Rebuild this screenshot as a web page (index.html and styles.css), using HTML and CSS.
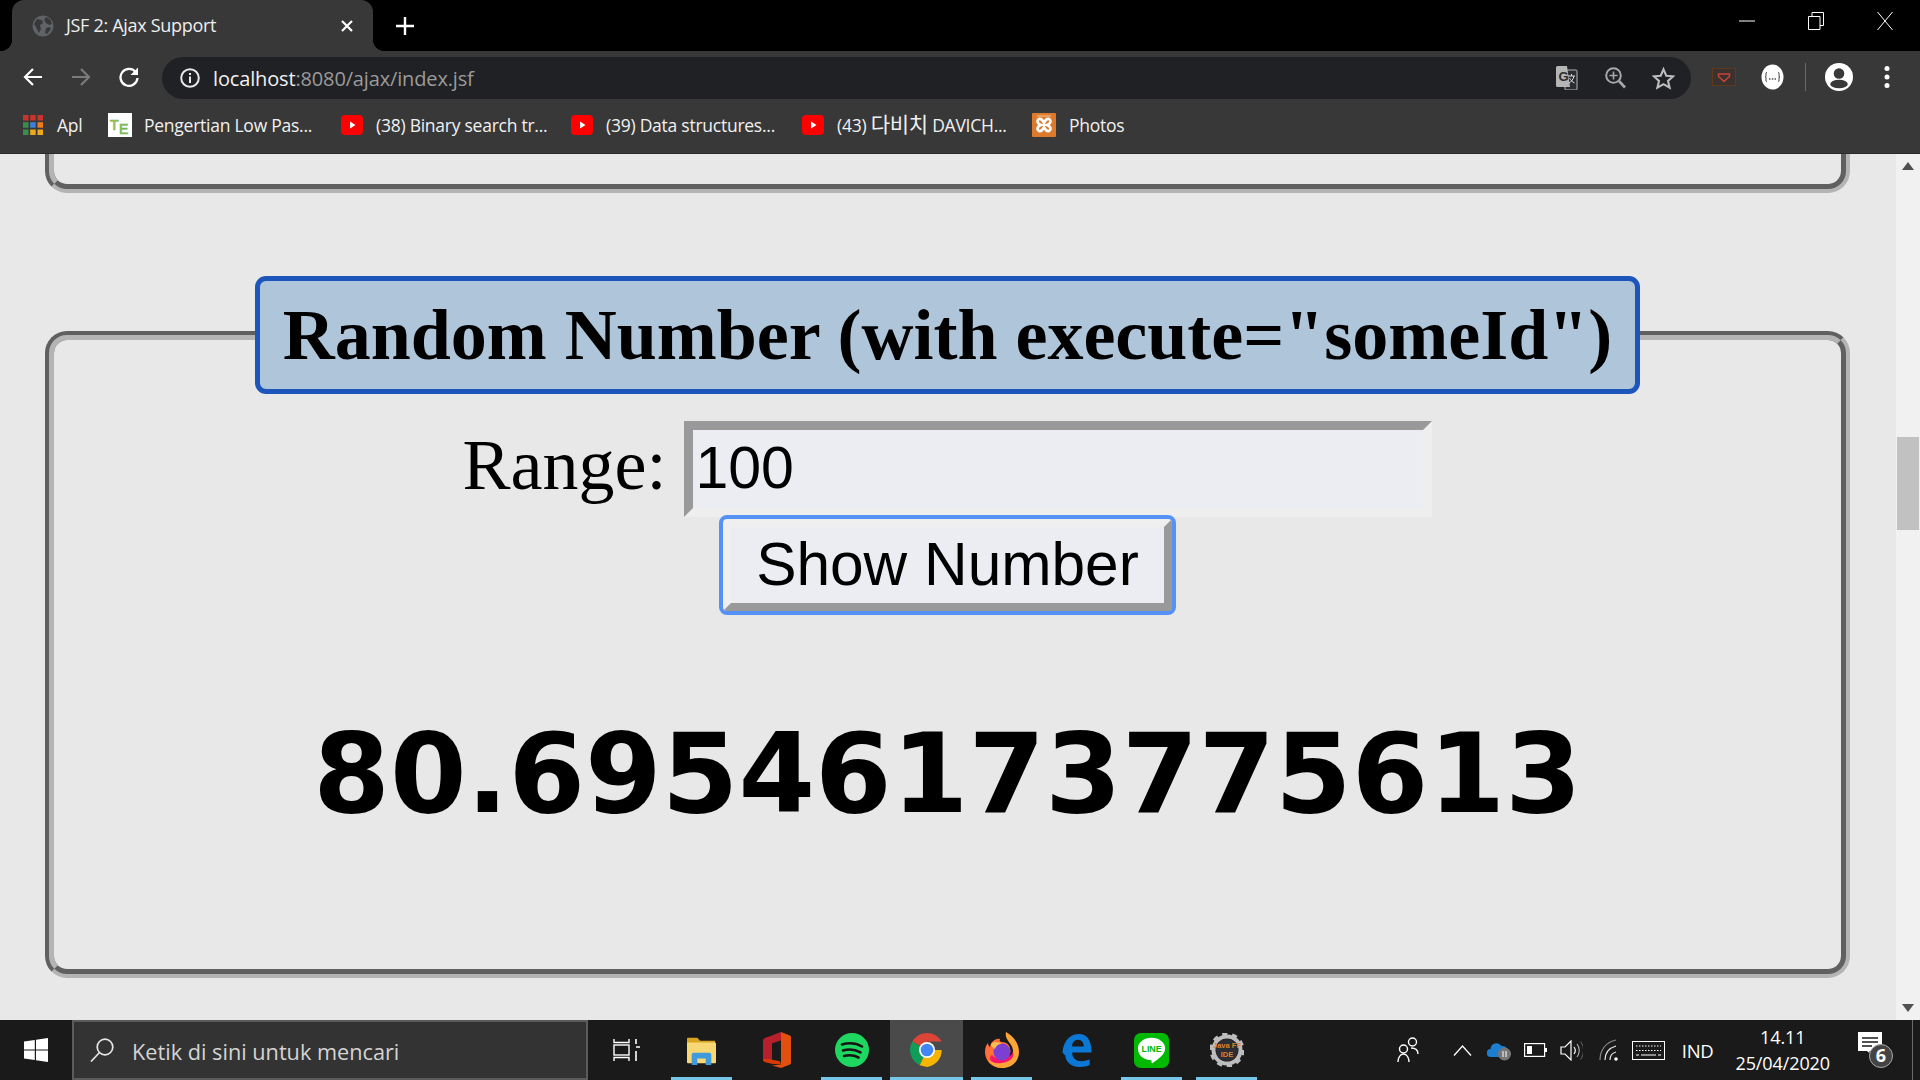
FILE: index.html
```html
<!DOCTYPE html>
<html lang="en">
<head>
  <meta charset="UTF-8">
  <title>JSF 2: Ajax Support</title>
  <link rel="stylesheet" href="styles.css">
</head>
<body>
  <svg class="defs" width="0" height="0">
    <symbol id="yt" viewBox="0 0 22 20">
      <rect x="0" y="0" width="22" height="20" rx="4" fill="#f00"/>
      <path d="M9 6.500 14.500 10 9 13.500z" fill="#fff"/>
    </symbol>
  </svg>

  <div class="tabbar">
    <div class="tab">
      <svg class="tab-icon" width="22" height="22" viewBox="0 0 22 22">
        <circle cx="11" cy="11" r="10.500" fill="#5f6368"/>
        <path d="M5 4l5 1 1 3-3 2 1 4-2 4-3-6-2-3zM14 2l4 2 2 5-3 1-3-2-2-3zM14 13l4-1 1 2-4 5-2-1z" fill="#383838"/>
      </svg>
      <span class="tab-title">JSF 2: Ajax Support</span>
      <svg class="tab-close" width="14" height="14" viewBox="0 0 14 14">
        <path d="M2 2l10 10M12 2 2 12" stroke="#fff" stroke-width="2.200"/>
      </svg>
    </div>
    <svg class="new-tab" width="20" height="20" viewBox="0 0 20 20">
      <path d="M10 1v18M1 10h18" stroke="#fff" stroke-width="2.400"/>
    </svg>
    <div class="win-controls">
      <svg width="16" height="16" viewBox="0 0 16 16"><path d="M0 8h16" stroke="#fff" stroke-width="1"/></svg>
      <svg width="16" height="18" viewBox="0 0 16 18"><path d="M.5 4.500h11.500v13H.5zM4 4.500V.5h11.500v13H12" fill="none" stroke="#fff"/></svg>
      <svg width="16" height="18" viewBox="0 0 16 18"><path d="M.5 0 15.500 18M15.500 0 .5 18" stroke="#fff"/></svg>
    </div>
  </div>

  <div class="toolbar">
    <div class="nav-btn">
      <svg width="20" height="20" viewBox="0 0 20 20"><path d="M19 10H2M10 2l-8 8 8 8" fill="none" stroke="#fff" stroke-width="2.200"/></svg>
    </div>
    <div class="nav-btn">
      <svg width="20" height="20" viewBox="0 0 20 20"><path d="M1 10h17M10 2l8 8-8 8" fill="none" stroke="#7b7b7b" stroke-width="2.200"/></svg>
    </div>
    <div class="nav-btn">
      <svg width="22" height="22" viewBox="0 0 22 22"><path d="M18 6.500A8.500 8.500 0 1 0 19.500 12" fill="none" stroke="#fff" stroke-width="2.300"/><path d="M20 1.500V9h-7.500z" fill="#fff"/></svg>
    </div>
    <div class="omnibox">
      <svg class="info-icon" width="20" height="20" viewBox="0 0 20 20">
        <circle cx="10" cy="10" r="8.800" fill="none" stroke="#e8e8e8" stroke-width="2"/>
        <path d="M9 8.500h2V15H9zM9 5h2v2H9z" fill="#e8e8e8"/>
      </svg>
      <span class="url"><span class="url-host">localhost</span>:8080/ajax/index.jsf</span>
      <div class="omni-icons">
        <div class="nav-btn">
          <svg width="22" height="24" viewBox="0 0 22 24">
            <rect x="9" y="4" width="12" height="20" rx="1" fill="#2b2c2f" stroke="#b5b5b5"/>
            <path d="M0 1.500A1.500 1.500 0 0 1 1.500 0H11l3 21H1.500A1.500 1.500 0 0 1 0 19.500z" fill="#b5b5b5"/>
            <text x="2.500" y="15" class="icon-g">G</text>
            <path d="M12 10h7M15.500 8v2M18 10c-1 4-3 6-5 7M13.500 12c1 2 3 4 5 5" fill="none" stroke="#dcdcdc"/>
          </svg>
        </div>
        <div class="nav-btn">
          <svg width="21" height="22" viewBox="0 0 21 22">
            <circle cx="8.500" cy="8.500" r="7.300" fill="none" stroke="#a8a8a8" stroke-width="2"/>
            <path d="M14 14l6 6.500" stroke="#a8a8a8" stroke-width="2.600"/>
            <path d="M8.500 4.500v8M4.500 8.500h8" stroke="#a8a8a8" stroke-width="1.600"/>
          </svg>
        </div>
        <div class="nav-btn">
          <svg width="23" height="23" viewBox="0 0 23 23"><path d="M11.500 2.300l2.800 6.400 6.900.6-5.200 4.600 1.600 6.800-6.100-3.600-6.100 3.600 1.600-6.800L1.800 9.300l6.900-.6z" fill="none" stroke="#bdbdbd" stroke-width="2.100"/></svg>
        </div>
      </div>
    </div>
    <div class="ext-icons">
      <div class="nav-btn">
        <svg width="24" height="18" viewBox="0 0 24 18">
          <rect x=".5" y=".5" width="23" height="17" fill="#3b3230" stroke="#5c3a1e"/>
          <path d="M6.500 6h11v2.500L12 13.500 6.500 8.500z" fill="none" stroke="#c94236" stroke-width="1.500"/>
        </svg>
      </div>
      <div class="nav-btn">
        <svg width="23" height="26" viewBox="0 0 23 26">
          <ellipse cx="11.500" cy="13" rx="11" ry="12.500" fill="#fff"/>
          <path d="M6 8.500c-1.500 0-1 1.500-1 3s-.5 1.500-1 1.500c.5 0 1 0 1 1.500s-.5 3 1 3M17 8.500c1.500 0 1 1.500 1 3s.5 1.500 1 1.500c-.5 0-1 0-1 1.500s.5 3-1 3" fill="none" stroke="#333" stroke-width="1"/>
          <path d="M8 15h1.500M10.800 15h1.500M13.500 15H15" stroke="#555" stroke-width="1.500"/>
        </svg>
      </div>
      <div class="toolbar-divider"></div>
      <div class="nav-btn">
        <svg width="28" height="28" viewBox="0 0 28 28">
          <circle cx="14" cy="14" r="14" fill="#fff"/>
          <circle cx="14" cy="10.500" r="5.300" fill="#383838"/>
          <ellipse cx="14" cy="21" rx="8.800" ry="4.300" fill="#383838"/>
        </svg>
      </div>
      <div class="nav-btn">
        <svg width="6" height="24" viewBox="0 0 6 24"><circle cx="3" cy="3.500" r="2.500" fill="#fff"/><circle cx="3" cy="12" r="2.500" fill="#fff"/><circle cx="3" cy="20.500" r="2.500" fill="#fff"/></svg>
      </div>
    </div>
  </div>

  <div class="bookmarks">
    <div class="bm bm-apps">
      <svg width="20" height="20" viewBox="0 0 20 20">
        <rect x="0" y="0" width="5.500" height="5.500" fill="#c8352d"/><rect x="7.200" y="0" width="5.500" height="5.500" fill="#c8352d"/><rect x="14.500" y="0" width="5.500" height="5.500" fill="#c8352d"/>
        <rect x="0" y="7.200" width="5.500" height="5.500" fill="#3a8e4a"/><rect x="7.200" y="7.200" width="5.500" height="5.500" fill="#3f7fdc"/><rect x="14.500" y="7.200" width="5.500" height="5.500" fill="#ef7d1a"/>
        <rect x="0" y="14.500" width="5.500" height="5.500" fill="#3a8e4a"/><rect x="7.200" y="14.500" width="5.500" height="5.500" fill="#efa81b"/><rect x="14.500" y="14.500" width="5.500" height="5.500" fill="#efa81b"/>
      </svg>
      <span>Apl</span>
    </div>
    <div class="bm bm-te">
      <svg width="24" height="24" viewBox="0 0 24 24">
        <rect width="24" height="24" fill="#fff"/>
        <text x="2" y="17" class="icon-te">T</text>
        <text x="11" y="21" class="icon-te icon-te-e">E</text>
      </svg>
      <span>Pengertian Low Pas...</span>
    </div>
    <div class="bm bm-38">
      <svg width="22" height="20"><use href="#yt"/></svg>
      <span>(38) Binary search tr...</span>
    </div>
    <div class="bm bm-39">
      <svg width="22" height="20"><use href="#yt"/></svg>
      <span>(39) Data structures...</span>
    </div>
    <div class="bm bm-43">
      <svg width="22" height="20"><use href="#yt"/></svg>
      <span>(43) <span class="bm-ko">다비치</span> DAVICH...</span>
    </div>
    <div class="bm bm-photos">
      <svg width="24" height="24" viewBox="0 0 24 24">
        <rect width="24" height="24" rx="1" fill="#dd7a2b"/>
        <path d="M5 3h14" stroke="#f6c89c" stroke-width="1"/>
        <path d="M7 6c3-1 4 2 5 4 1-2 2-5 5-4 3 2 1 5-2 6 3 1 5 4 2 6-3 1-4-2-5-4-1 2-2 5-5 4-3-2-1-5 2-6-3-1-5-4-2-6z" fill="none" stroke="#fff" stroke-width="2.600"/>
      </svg>
      <span>Photos</span>
    </div>
  </div>

  <div class="viewport">
    <div class="page">
      <div class="prev-box"></div>

      <fieldset class="panel">
        <legend class="panel-title">Random Number (with execute="someId")</legend>
        <div class="range-row">
          <label class="range-label" for="range">Range:</label>
          <input class="range-input" id="range" type="text" value="100">
        </div>
        <button class="show-btn" type="button">Show Number</button>
        <div class="result">80.69546173775613</div>
      </fieldset>
    </div>

    <div class="scrollbar">
      <div class="scroll-arrow"><svg width="12" height="8" viewBox="0 0 12 8"><path d="M6 0l6 8H0z" fill="#505050"/></svg></div>
      <div class="scroll-thumb"></div>
      <div class="scroll-arrow scroll-arrow-down"><svg width="12" height="8" viewBox="0 0 12 8"><path d="M0 0h12L6 8z" fill="#505050"/></svg></div>
    </div>
  </div>

  <div class="taskbar">
    <div class="start">
      <svg width="24" height="24" viewBox="0 0 24 24"><path d="M0 3.400 10.800 1.900V11.400H0zM12 1.700 24 0V11.400H12zM0 12.600H10.800V22.100L0 20.600zM12 12.600H24V24L12 22.300z" fill="#fff"/></svg>
    </div>
    <div class="search">
      <svg width="24" height="24" viewBox="0 0 24 24"><circle cx="15" cy="9" r="7.800" fill="none" stroke="#e6e6e6" stroke-width="1.700"/><path d="M9.500 14.500 1 23.500" stroke="#e6e6e6" stroke-width="1.700"/></svg>
      <span>Ketik di sini untuk mencari</span>
    </div>
    <div class="task-apps">
      <div class="task-app">
        <svg width="28" height="24" viewBox="0 0 28 24">
          <path d="M1 1v3.500h15V1M1 23v-3.500h15V23" fill="none" stroke="#fff" stroke-width="1.400"/>
          <rect x="1" y="7" width="15" height="10" fill="none" stroke="#fff" stroke-width="1.400"/>
          <path d="M23 1v5M23 9h4M23 13v10" stroke="#fff" stroke-width="1.600"/>
        </svg>
      </div>
      <div class="task-app is-open">
        <svg width="33" height="29" viewBox="0 0 33 31">
          <path d="M1 3a1 1 0 0 1 1-1h10l3 3h16v4H1z" fill="#d9a520"/>
          <path d="M1 7h30a1 1 0 0 1 1 1v20a1 1 0 0 1-1 1H2a1 1 0 0 1-1-1z" fill="#f8d775"/>
          <path d="M6 31V20a2 2 0 0 1 2-2h17a2 2 0 0 1 2 2v11h-6v-7h-9v7z" fill="#3f9bdc"/>
        </svg>
      </div>
      <div class="task-app">
        <svg width="28" height="36" viewBox="0 0 28 42" preserveAspectRatio="none">
          <path d="M18 0 27 4c.6.300 1 1 1 2v30c0 1-.4 1.700-1 2l-9 4-9-3 9-1V8z" fill="#e2500f"/>
          <path d="M18 0 2 7c-1 .5-2 1.500-2 3v22c0 1.500 1 2.500 2 3l7 2V13l9-3z" fill="#b5202c"/>
          <path d="M0 32c0 1.500 1 2.500 2 3l7 2 9 1-1-4-9-2c-3-.7-6-.5-8 0z" fill="#d83b01"/>
        </svg>
      </div>
      <div class="task-app is-open">
        <svg width="34" height="34" viewBox="0 0 34 34">
          <circle cx="17" cy="17" r="17" fill="#1ed760"/>
          <path d="M7 11.500c7-2 14-1.500 20 2M8 17.500c6-1.700 12-1.200 17.500 1.800M9 23c5-1.400 10-1 14.500 1.500" fill="none" stroke="#191414" stroke-width="2.600" stroke-linecap="round"/>
        </svg>
      </div>
      <div class="task-app is-active">
        <svg width="34" height="34" viewBox="0 0 34 34">
          <path d="M17 17 2.300 8.500A17 17 0 0 1 31.700 8.500H17z" fill="#db4437"/>
          <path d="M17 17 9.700 32.300A17 17 0 0 1 2.300 8.500z" fill="#0f9d58"/>
          <path d="M17 17h14.700A17 17 0 0 1 17 34l-7.300-1.700z" fill="#f4b400"/>
          <circle cx="17" cy="17" r="8" fill="#fff"/>
          <circle cx="17" cy="17" r="6.300" fill="#4285f4"/>
        </svg>
      </div>
      <div class="task-app is-open">
        <svg width="34" height="36" viewBox="0 0 34 36">
          <path d="M17 36C7 36 0 29 0 20c0-4 1-7 3-9 0 2 1 3 2 4 1-5 5-9 10-8-1 2 0 3 2 3 5 0 9 4 8 9 2-1 3-3 3-4z" fill="#ff7139"/>
          <path d="M21 0c7 4 13 11 13 20 0 9-7 16-17 16-6 0-11-3-14-8 4 3 22 6 25-8 1-8-9-11-7-20z" fill="#ffa436"/>
          <path d="M17 31C5 33 3 25 7 23c2 3 8 5 14 3 5-2 7-5 7-6 2 5-3 10-11 11z" fill="#f5156c"/>
          <circle cx="17" cy="20" r="8.500" fill="#7d3fd1"/>
          <path d="M6 12c3-3 8-2 11 0-4 0-6 2-7 5-2-1-4-3-4-5z" fill="#ffbd4f"/>
        </svg>
      </div>
      <div class="task-app">
        <svg width="30" height="33" viewBox="0 0 30 34">
          <path d="M0 19C1 7 8 0 17 0c8 0 13 6 13 19H10c0 6 4 9 10 9 3 0 6-1 8-2v6c-3 1.500-6 2-10 2C8 34 3 28 3 22c-1 0-2-2-3-3zm10-6h12c0-4-2-7-6-7s-6 3-6 7z" fill="#0a78d4"/>
        </svg>
      </div>
      <div class="task-app is-open is-split">
        <svg width="35" height="35" viewBox="0 0 36 36">
          <rect width="36" height="36" rx="7" fill="#00b900"/>
          <path d="M18 5c8 0 14 5 14 11 0 6-7 11-13 15-1 .5-1-1-1-3C10 28 4 23 4 16 4 10 10 5 18 5z" fill="#fff"/>
          <text x="18" y="20" class="icon-line">LINE</text>
        </svg>
      </div>
      <div class="task-app is-open">
        <svg width="34" height="34" viewBox="0 0 34 34">
          <circle cx="17" cy="17" r="13.500" fill="none" stroke="#bdbdbd" stroke-width="4"/>
          <circle cx="17" cy="17" r="15.500" fill="none" stroke="#bdbdbd" stroke-width="4" stroke-dasharray="5 4.700"/>
          <circle cx="17" cy="17" r="11" fill="#2c2c33"/>
          <text x="17" y="15" class="icon-java">Java FF</text>
          <text x="17" y="24" class="icon-java">IDE</text>
        </svg>
      </div>
    </div>

    <div class="tray">
      <svg class="tray-people" width="22" height="26" viewBox="0 0 22 26">
        <circle cx="15.500" cy="5" r="4" fill="none" stroke="#fff" stroke-width="1.400"/>
        <circle cx="6.500" cy="12" r="4" fill="none" stroke="#fff" stroke-width="1.400"/>
        <path d="M1 25c0-4 2-8 5.500-8s5.500 4 5.500 8M14 11c4 0 7 2 7 6" fill="none" stroke="#fff" stroke-width="1.400"/>
      </svg>
      <svg class="tray-chevron" width="19" height="11" viewBox="0 0 19 11"><path d="M1 10.500 9.500 1 18 10.500" fill="none" stroke="#fff" stroke-width="1.300"/></svg>
      <svg class="tray-cloud" width="24" height="21" viewBox="0 0 24 21">
        <path d="M4 17a4 4 0 0 1-.5-8 6 6 0 0 1 11-3 5 5 0 0 1 6 5 3 3 0 0 1 0 6z" fill="#1b7ed0"/>
        <circle cx="17.500" cy="14" r="6.500" fill="#767676"/>
        <path d="M16 11v6M19 11v6" stroke="#fff"/>
      </svg>
      <svg class="tray-battery" width="23" height="14" viewBox="0 0 23 14">
        <rect x=".6" y=".6" width="20" height="12.800" fill="none" stroke="#fff" stroke-width="1.200"/>
        <rect x="3" y="3" width="5" height="8" fill="#fff"/>
        <path d="M21 5h2v4h-2z" fill="#fff"/>
      </svg>
      <svg class="tray-volume" width="23" height="21" viewBox="0 0 23 21">
        <path d="M1 7h4l6-6v19l-6-6H1z" fill="none" stroke="#fff" stroke-width="1.200"/>
        <path d="M14 7c1.500 2 1.500 5 0 7" fill="none" stroke="#fff" stroke-width="1.200"/>
        <path d="M17 4c3 3.500 3 9.500 0 13" fill="none" stroke="#bbb" stroke-width="1.100"/>
        <path d="M20.500 1.500c4 5 4 13 0 18" fill="none" stroke="#555" stroke-width="1.100"/>
      </svg>
      <svg class="tray-wifi" width="20" height="22" viewBox="0 0 20 22">
        <path d="M1 21C1 11 7 3 17 1" fill="none" stroke="#8a8a8a" stroke-width="1.200"/>
        <path d="M6 21c0-7 4-12 11-14" fill="none" stroke="#e6e6e6" stroke-width="1.200"/>
        <path d="M11 21c0-4 2-7 6-8" fill="none" stroke="#e6e6e6" stroke-width="1.200"/>
        <circle cx="17" cy="20" r="1.800" fill="#fff"/>
      </svg>
      <svg class="tray-keyboard" width="33" height="19" viewBox="0 0 33 19">
        <rect x=".5" y=".5" width="32" height="18" fill="none" stroke="#fff"/>
        <path d="M4 5h25M4 9.500h25" stroke="#fff" stroke-dasharray="1.500 1.500"/>
        <path d="M4 14h3M9 14h15M26 14h3" stroke="#fff"/>
      </svg>
      <span class="tray-lang">IND</span>
      <div class="tray-clock">
        <span>14.11</span>
        <span>25/04/2020</span>
      </div>
      <div class="tray-notify">
        <svg width="24" height="25" viewBox="0 0 24 25">
          <path d="M0 0h24v19H12l-1 1 5 5-7-6H0z" fill="#fff"/>
          <path d="M4 6h16M4 10h16M4 14h10" stroke="#1a1a1a" stroke-width="1.400"/>
        </svg>
        <span class="notify-badge">6</span>
      </div>
      <div class="show-desktop"></div>
    </div>
  </div>
</body>
</html>
```

FILE: styles.css
```css
* {
  box-sizing: border-box;
}
html, body {
  height: 100%;
}
body {
  margin: 0;
  display: flex;
  flex-direction: column;
  height: 100vh;
  overflow: hidden;
  background-color: #e8e8e8;
  font-family: "Open Sans", "Noto Sans", sans-serif;
  color: #fff;
}
svg {
  flex-shrink: 0;
  display: block;
}
.defs {
  position: absolute;
}

/* browser chrome */
.tabbar {
  display: flex;
  align-items: center;
  height: 51px;
  background-color: #000;
  flex-shrink: 0;
}
.tab {
  position: relative;
  display: flex;
  align-items: center;
  width: 361px;
  height: 51px;
  margin-left: 12px;
  padding: 0 20px;
  background-color: #383838;
  border-radius: 12px 12px 0 0;
}
.tab::before, .tab::after {
  content: "";
  position: absolute;
  bottom: 0;
  width: 12px;
  height: 12px;
}
.tab::before {
  left: -12px;
  background: radial-gradient(circle at 0 0, #000 12px, #383838 12.500px);
}
.tab::after {
  right: -12px;
  background: radial-gradient(circle at 100% 0, #000 12px, #383838 12.500px);
}
.tab-title {
  margin-left: 12px;
  margin-top: -2px;
  font-size: 18px;
  letter-spacing: -0.3px;
  white-space: nowrap;
  color: #eee;
}
.tab-close {
  margin-left: auto;
  margin-right: -1px;
}
.new-tab {
  margin-left: 22px;
}
.win-controls {
  display: flex;
  align-items: center;
  gap: 53px;
  margin-left: auto;
  padding-right: 27px;
  margin-top: -10px;
}

.toolbar {
  display: flex;
  align-items: center;
  height: 52px;
  padding-left: 9px;
  background-color: #383838;
  flex-shrink: 0;
}
.nav-btn {
  display: flex;
  align-items: center;
  justify-content: center;
  width: 48px;
  height: 42px;
  flex-shrink: 0;
}
.omnibox {
  display: flex;
  align-items: center;
  width: 1529px;
  height: 42px;
  margin-left: 9px;
  margin-top: 2px;
  padding-left: 18px;
  padding-right: 4px;
  background-color: #202124;
  border-radius: 21px;
}
.url {
  margin-left: 13px;
  font-size: 20px;
  letter-spacing: -0.15px;
  color: #9b9b9b;
}
.url-host {
  color: #f1f1f1;
}
.omni-icons {
  display: flex;
  margin-left: auto;
}
.ext-icons {
  display: flex;
  align-items: center;
  margin-left: 9px;
}
.toolbar-divider {
  width: 1px;
  height: 28px;
  margin: 0 9px;
  background-color: #6a6a6a;
}
.icon-g {
  font: bold 13px "Liberation Sans", sans-serif;
  fill: #2b2c2f;
}

.bookmarks {
  display: flex;
  align-items: center;
  height: 51px;
  padding-left: 23px;
  padding-bottom: 7px;
  background-color: #383838;
  border-bottom: 1px solid #2a2a2a;
  flex-shrink: 0;
}
.bm {
  display: flex;
  align-items: center;
  gap: 13px;
  font-size: 17.500px;
  letter-spacing: -0.25px;
  color: #f1f1f1;
  white-space: nowrap;
}
.bm span {
  font-family: "Open Sans", "Noto Sans CJK KR", sans-serif;
}
.bm .bm-ko {
  font-size: 21px;
  line-height: 1;
}
.bm-apps {
  width: 85px;
  gap: 14px;
}
.bm-te {
  width: 233px;
  gap: 12px;
}
.bm-38 {
  width: 230px;
}
.bm-39 {
  width: 231px;
}
.bm-43 {
  width: 230px;
}
.icon-te {
  font: 14px "Liberation Sans", sans-serif;
  fill: #c9c93a;
  stroke: #6eb457;
  stroke-width: .7px;
}
.icon-te-e {
  fill: #8fc45a;
}

/* page area */
.viewport {
  display: flex;
  flex: 1;
  min-height: 0;
}
.page {
  flex: 1;
  min-width: 0;
  padding: 0 46px 0 45px;
  overflow: hidden;
  color: #000;
}
.prev-box {
  height: 39px;
  border: 9px groove #b4b4b4;
  border-top: none;
  border-radius: 0 0 22px 22px;
}
.panel {
  display: flex;
  flex-direction: column;
  align-items: center;
  min-width: 0;
  margin: 83px 0 0;
  padding: 27px 0 0;
  height: 702px;
  border: 9px groove #b4b4b4;
  border-radius: 22px;
}
.panel-title {
  margin: 0 auto;
  padding: 0 23px;
  height: 118px;
  line-height: 108px;
  font-family: "Liberation Serif", serif;
  font-size: 72px;
  font-weight: bold;
  white-space: nowrap;
  background-color: #afc5da;
  border: 5px solid #1d56bb;
  border-radius: 11px;
}
.range-row {
  display: flex;
  align-items: center;
  gap: 18px;
}
.range-label {
  padding-bottom: 7px;
  font-family: "Liberation Serif", serif;
  font-size: 72px;
}
.range-input {
  width: 748px;
  height: 96px;
  padding: 0 2px 2px;
  font-family: "Liberation Sans", sans-serif;
  font-size: 59px;
  color: #000;
  background-color: #ebedf2;
  border: 9px solid;
  border-color: #999 #eeeeee #eeeeee #999;
  outline: none;
}
.show-btn {
  width: 449px;
  height: 92px;
  margin-top: 2px;
  padding: 0 0 2px;
  font-family: "Liberation Sans", sans-serif;
  font-size: 60.400px;
  color: #000;
  background-color: #ebedf2;
  border: 8px solid;
  border-color: #efefef #999 #999 #efefef;
  border-radius: 4px;
  outline: 4px solid #5592f7;
}
.result {
  margin-top: 99px;
  font-family: "DejaVu Sans", sans-serif;
  font-size: 110.200px;
  font-weight: bold;
  white-space: nowrap;
}

.scrollbar {
  display: flex;
  flex-direction: column;
  width: 24px;
  flex-shrink: 0;
  background-color: #f1f1f1;
}
.scroll-arrow {
  display: flex;
  align-items: center;
  justify-content: center;
  height: 24px;
}
.scroll-arrow-down {
  margin-top: auto;
}
.scroll-thumb {
  height: 93px;
  margin: 259px 1px 0;
  background-color: #c1c1c1;
}

/* windows taskbar */
.taskbar {
  display: flex;
  align-items: stretch;
  height: 60px;
  flex-shrink: 0;
  background-color: #1a1a1a;
}
.start {
  display: flex;
  align-items: center;
  justify-content: center;
  width: 72px;
}
.search {
  display: flex;
  align-items: center;
  width: 516px;
  padding-left: 16px;
  background-color: #333;
  border: 2px solid #5b5b5b;
  border-bottom-width: 2px;
}
.search span {
  margin-left: 18px;
  margin-top: 2px;
  font-size: 21.700px;
  color: #d4d4d4;
}
.task-apps {
  display: flex;
  margin-left: 1px;
}
.task-app {
  position: relative;
  display: flex;
  align-items: center;
  justify-content: center;
  width: 75px;
}
.task-app.is-open::after {
  content: "";
  position: absolute;
  left: 7px;
  right: 7px;
  bottom: 0;
  height: 3px;
  background-color: #76c8ea;
}
.task-app.is-active {
  margin: 0 1px;
  width: 73px;
  background-color: #4a4a4a;
}
.task-app.is-active::after {
  content: "";
  position: absolute;
  left: 0;
  right: 0;
  bottom: 0;
  height: 3px;
  background-color: #76c8ea;
}
.icon-line {
  font: bold 9px "Liberation Sans", sans-serif;
  fill: #00b900;
  text-anchor: middle;
}
.icon-java {
  font: bold 7.500px "Liberation Sans", sans-serif;
  fill: #d9822b;
  text-anchor: middle;
}
.tray {
  display: flex;
  align-items: center;
  margin-left: auto;
}
.tray-chevron {
  margin-left: 34px;
}
.tray-cloud {
  margin-left: 15px;
}
.tray-battery {
  margin-left: 13px;
}
.tray-volume {
  margin-left: 13px;
}
.tray-wifi {
  margin-left: 16px;
}
.tray-keyboard {
  margin-left: 13px;
}
.tray-lang {
  margin-left: 17px;
  font-size: 18.500px;
  letter-spacing: -0.3px;
}
.tray-clock {
  display: flex;
  flex-direction: column;
  align-items: center;
  gap: 5px;
  margin-left: 22px;
  font-size: 18px;
  line-height: 21px;
  letter-spacing: -0.1px;
}
.tray-notify {
  position: relative;
  width: 35px;
  height: 36px;
  margin-left: 28px;
}
.notify-badge {
  position: absolute;
  right: 0;
  bottom: 0;
  width: 24px;
  height: 24px;
  line-height: 21px;
  text-align: center;
  font-size: 18px;
  font-weight: bold;
  background-color: #444;
  border: 1px solid #aaa;
  border-radius: 50%;
}
.show-desktop {
  width: 1px;
  height: 60px;
  margin-left: 19px;
  margin-right: 7px;
  background-color: #6a6a6a;
}
```
